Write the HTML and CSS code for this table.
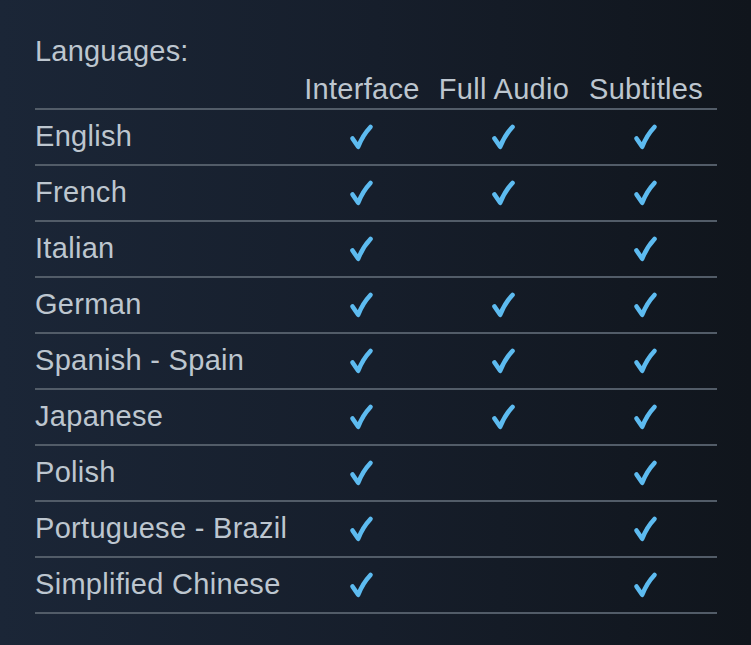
FILE: index.html
```html
<!DOCTYPE html>
<html>
<head>
<meta charset="utf-8">
<link rel="stylesheet" href="styles.css">
</head>
<body>
<div class="panel">
  <div class="title">Languages:</div>
  <div class="table">
    <div class="row head">
      <div class="lang"></div>
      <div class="col">Interface</div>
      <div class="col">Full Audio</div>
      <div class="col">Subtitles</div>
    </div>
    <div class="row"><div class="lang">English</div><div class="c"><svg class="chk" viewBox="0 0 26 28"><use href="#ck"/></svg></div><div class="c"><svg class="chk" viewBox="0 0 26 28"><use href="#ck"/></svg></div><div class="c"><svg class="chk" viewBox="0 0 26 28"><use href="#ck"/></svg></div></div>
    <div class="row"><div class="lang">French</div><div class="c"><svg class="chk" viewBox="0 0 26 28"><use href="#ck"/></svg></div><div class="c"><svg class="chk" viewBox="0 0 26 28"><use href="#ck"/></svg></div><div class="c"><svg class="chk" viewBox="0 0 26 28"><use href="#ck"/></svg></div></div>
    <div class="row"><div class="lang">Italian</div><div class="c"><svg class="chk" viewBox="0 0 26 28"><use href="#ck"/></svg></div><div class="c"></div><div class="c"><svg class="chk" viewBox="0 0 26 28"><use href="#ck"/></svg></div></div>
    <div class="row"><div class="lang">German</div><div class="c"><svg class="chk" viewBox="0 0 26 28"><use href="#ck"/></svg></div><div class="c"><svg class="chk" viewBox="0 0 26 28"><use href="#ck"/></svg></div><div class="c"><svg class="chk" viewBox="0 0 26 28"><use href="#ck"/></svg></div></div>
    <div class="row"><div class="lang">Spanish - Spain</div><div class="c"><svg class="chk" viewBox="0 0 26 28"><use href="#ck"/></svg></div><div class="c"><svg class="chk" viewBox="0 0 26 28"><use href="#ck"/></svg></div><div class="c"><svg class="chk" viewBox="0 0 26 28"><use href="#ck"/></svg></div></div>
    <div class="row"><div class="lang">Japanese</div><div class="c"><svg class="chk" viewBox="0 0 26 28"><use href="#ck"/></svg></div><div class="c"><svg class="chk" viewBox="0 0 26 28"><use href="#ck"/></svg></div><div class="c"><svg class="chk" viewBox="0 0 26 28"><use href="#ck"/></svg></div></div>
    <div class="row"><div class="lang">Polish</div><div class="c"><svg class="chk" viewBox="0 0 26 28"><use href="#ck"/></svg></div><div class="c"></div><div class="c"><svg class="chk" viewBox="0 0 26 28"><use href="#ck"/></svg></div></div>
    <div class="row"><div class="lang">Portuguese - Brazil</div><div class="c"><svg class="chk" viewBox="0 0 26 28"><use href="#ck"/></svg></div><div class="c"></div><div class="c"><svg class="chk" viewBox="0 0 26 28"><use href="#ck"/></svg></div></div>
    <div class="row"><div class="lang">Simplified Chinese</div><div class="c"><svg class="chk" viewBox="0 0 26 28"><use href="#ck"/></svg></div><div class="c"></div><div class="c"><svg class="chk" viewBox="0 0 26 28"><use href="#ck"/></svg></div></div>
  </div>
</div>
<svg class="defs" width="0" height="0">
  <defs>
    <path id="ck" d="M4.5 15.5 L10.2 23.8 Q14.5 12.5 22.5 4"/>
  </defs>
</svg>
</body>
</html>
```

FILE: styles.css
```css
html, body {
  margin: 0;
  padding: 0;
}
body {
  width: 751px;
  height: 645px;
  overflow: hidden;
  background: linear-gradient(to right, #1b2637 0%, #161e2b 50%, #10151c 100%);
  font-family: "Liberation Sans", Arial, sans-serif;
  color: #bdc6cf;
}
.panel {
  padding: 34px 34px 0 35px;
}
.title {
  font-size: 29px;
  line-height: 34px;
  height: 37px;
  letter-spacing: 0.2px;
}
.table {
  width: 682px;
}
.row {
  display: grid;
  grid-template-columns: 256px 142px 142px 142px;
  height: 54px;
  border-bottom: 2px solid #525c68;
}
.row.head {
  height: 37px;
}
.lang, .col {
  font-size: 29px;
  line-height: 34px;
  white-space: nowrap;
  letter-spacing: 0.3px;
}
.lang {
  padding-top: 9px;
}
.head .col {
  text-align: center;
  padding-top: 1px;
}
.c {
  display: flex;
  align-items: center;
  justify-content: center;
  padding-right: 2px;
}
.chk {
  width: 26px;
  height: 28px;
  fill: none;
  stroke: #5dbbf0;
  stroke-width: 4.6;
  stroke-linecap: round;
  stroke-linejoin: round;
}
.defs {
  position: absolute;
  width: 0;
  height: 0;
}
```
